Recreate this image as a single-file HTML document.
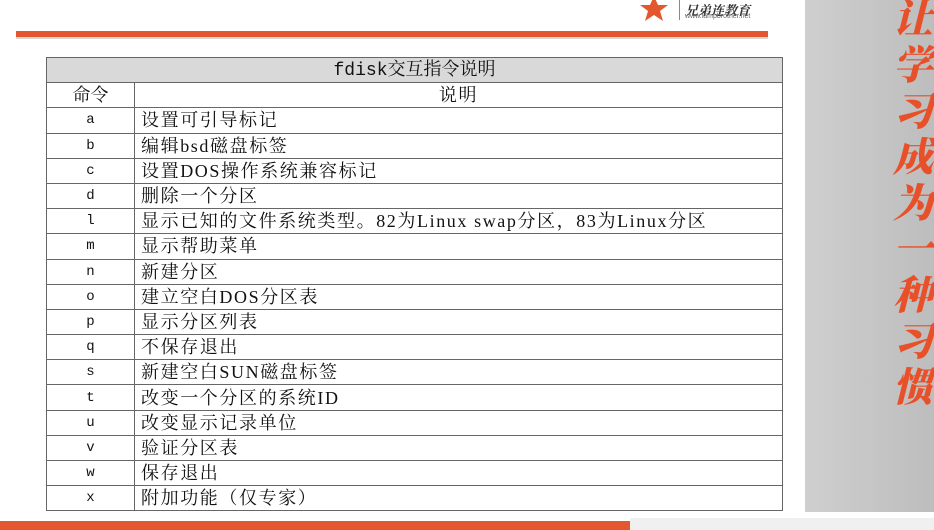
<!DOCTYPE html>
<html><head><meta charset="utf-8"><style>
body{margin:0;width:934px;height:530px;background:#fff;position:relative;overflow:hidden;font-family:"Liberation Serif","Noto Serif CJK SC",serif;}
.topline{position:absolute;left:16px;top:31px;width:752px;height:6px;background:#e4572e;border-bottom:2px solid #d8d8d8;}
.panel{position:absolute;left:805px;top:0;width:129px;height:512px;background:linear-gradient(90deg,#cfcfcf,#bdbdbd);}
.callig{position:absolute;left:893px;top:-6px;width:45px;font-size:40px;line-height:46px;color:#e8502a;font-family:"Noto Serif CJK SC",serif;font-weight:900;font-style:italic;}
.bottom{position:absolute;left:0;top:521px;width:630px;height:9px;background:#e4572e;}
.bottom2{position:absolute;left:630px;top:518px;width:304px;height:12px;background:#f0f0f0;}
table{position:absolute;left:46px;top:57px;width:737px;border-collapse:collapse;font-size:18px;}
tr{height:25.2px;}
td{border:1px solid #666;padding:0 6px;line-height:22px;color:#111;letter-spacing:1.6px;}
td.c{text-align:center;width:75px;font-family:"Liberation Mono",monospace;font-size:14px;letter-spacing:0;}
.title td{background:#d9d9d9;text-align:center;}
.hdr td{text-align:center;}
.logo{position:absolute;left:636px;top:-4px;}
.lt{position:absolute;left:685px;top:0;font-size:13px;font-style:italic;color:#333;font-weight:bold;}
.lu{position:absolute;left:685px;top:13px;font-size:7px;color:#666;font-family:"Liberation Sans",sans-serif;}
</style></head><body>
<svg class="logo" width="36" height="26" viewBox="0 0 36 26"><polygon points="18,0 22,9 32,9 24,15 27,25 18,19 9,25 12,15 4,9 14,9" fill="#e4572e"/></svg>
<div style="position:absolute;left:679px;top:0;width:1px;height:20px;background:#888"></div>
<div class="lt">兄弟连教育</div>
<div class="lu">www.lampbrother.net</div>
<div class="topline"></div>
<div class="panel"></div>
<div class="callig">让学习成为一种习惯</div>
<table>
<tr class="title"><td colspan="2" style="letter-spacing:0"><span style="font-family:'Liberation Mono',monospace">fdisk</span>交互指令说明</td></tr>
<tr class="hdr"><td class="c" style="font-family:inherit;font-size:18px">命令</td><td>说明</td></tr>
<tr><td class="c">a</td><td>设置可引导标记</td></tr>
<tr><td class="c">b</td><td>编辑bsd磁盘标签</td></tr>
<tr><td class="c">c</td><td>设置DOS操作系统兼容标记</td></tr>
<tr><td class="c">d</td><td>删除一个分区</td></tr>
<tr><td class="c">l</td><td>显示已知的文件系统类型。82为Linux swap分区，83为Linux分区</td></tr>
<tr><td class="c">m</td><td>显示帮助菜单</td></tr>
<tr><td class="c">n</td><td>新建分区</td></tr>
<tr><td class="c">o</td><td>建立空白DOS分区表</td></tr>
<tr><td class="c">p</td><td>显示分区列表</td></tr>
<tr><td class="c">q</td><td>不保存退出</td></tr>
<tr><td class="c">s</td><td>新建空白SUN磁盘标签</td></tr>
<tr><td class="c">t</td><td>改变一个分区的系统ID</td></tr>
<tr><td class="c">u</td><td>改变显示记录单位</td></tr>
<tr><td class="c">v</td><td>验证分区表</td></tr>
<tr><td class="c">w</td><td>保存退出</td></tr>
<tr><td class="c">x</td><td>附加功能（仅专家）</td></tr>
</table>
<div class="bottom"></div><div class="bottom2"></div>
</body></html>
